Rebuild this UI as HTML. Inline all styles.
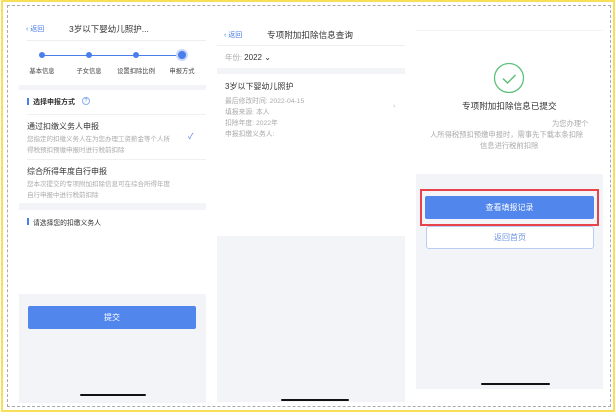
<!DOCTYPE html>
<html><head><meta charset="utf-8"><style>
*{margin:0;padding:0;box-sizing:border-box}
body{width:616px;height:413px;background:#fff;position:relative;overflow:hidden;font-family:"Liberation Sans","Noto Sans CJK SC",sans-serif;color:#333}
.a{position:absolute;white-space:nowrap}
.yl{position:absolute;left:1px;top:0;width:614px;height:412px;border:2px solid #f8df5a}
.dash{position:absolute;left:7px;top:5px;width:604px;height:402px;border:1px dashed #aaa}
.p{position:absolute;background:#f3f4f8}
.w{position:absolute;background:#fff}
.t{font-size:8px;color:#333}
.s{font-size:6.5px;color:#aaa}
.bl{color:#4a7eea}
.hi{position:absolute;height:2px;background:#111;border-radius:1px}
.dot{position:absolute;width:6px;height:6px;border-radius:50%;background:#4a7eea}
.lb{position:absolute;font-size:6.3px;color:#444;text-align:center;width:50px;white-space:nowrap}
</style></head><body>
<div class="yl"></div><div class="dash"></div>

<!-- panel 1 -->
<div class="p" style="left:19px;top:13px;width:187px;height:390px"></div>
<div class="w" style="left:19px;top:13px;width:187px;height:72px"></div>
<div class="w" style="left:19px;top:90px;width:187px;height:113px"></div>
<div class="w" style="left:19px;top:210px;width:187px;height:84px"></div>
<div class="a bl" style="left:26px;top:24px;font-size:7px">&#x2039; 返回</div>
<div class="a t" style="left:69px;top:23px;font-size:8.5px">3岁以下婴幼儿照护...</div>
<div class="a" style="left:27px;top:40px;width:179px;height:1px;background:#eee"></div>
<div class="a" style="left:42px;top:55px;width:140px;height:1px;background:#4a7eea"></div>
<div class="dot" style="left:39px;top:52px"></div>
<div class="dot" style="left:86px;top:52px"></div>
<div class="dot" style="left:133px;top:52px"></div>
<div class="dot" style="left:178px;top:51px;width:8px;height:8px;box-shadow:0 0 0 2px #c9d8fa"></div>
<div class="lb" style="left:17px;top:66px">基本信息</div>
<div class="lb" style="left:64px;top:66px">子女信息</div>
<div class="lb" style="left:111px;top:66px">设置扣除比例</div>
<div class="lb" style="left:157px;top:66px">申报方式</div>
<div class="a" style="left:27px;top:98px;width:2px;height:7px;background:#4a7eea"></div>
<div class="a" style="left:33px;top:97px;font-size:7px;color:#333;font-weight:bold">选择申报方式</div>
<div class="a bl" style="left:82px;top:97px;width:8px;height:8px;border:1px solid #8ab0f2;border-radius:50%;font-size:5px;text-align:center;line-height:6px">?</div>
<div class="a" style="left:27px;top:114px;width:179px;height:1px;background:#f0f0f0"></div>
<div class="a t" style="left:27px;top:121px">通过扣缴义务人申报</div>
<div class="a s" style="left:27px;top:133px">您指定的扣缴义务人在为您办理工资薪金等个人所</div>
<div class="a s" style="left:27px;top:144px">得税预扣预缴申报时进行税前扣除</div>
<div class="a bl" style="left:188px;top:131px;font-size:8px">✓</div>
<div class="a" style="left:27px;top:159px;width:179px;height:1px;background:#f0f0f0"></div>
<div class="a t" style="left:27px;top:166px">综合所得年度自行申报</div>
<div class="a s" style="left:27px;top:178px">您本次提交的专项附加扣除信息可在综合所得年度</div>
<div class="a s" style="left:27px;top:189px">自行申报中进行税前扣除</div>
<div class="a" style="left:27px;top:218px;width:2px;height:7px;background:#4a7eea"></div>
<div class="a" style="left:33px;top:217px;font-size:6.8px;color:#333">请选择您的扣缴义务人</div>
<div class="a" style="left:28px;top:306px;width:168px;height:23px;background:#5186ec;border-radius:2px;color:#fff;font-size:8px;text-align:center;line-height:23px">提交</div>
<div class="hi" style="left:80px;top:394px;width:66px"></div>

<!-- panel 2 -->
<div class="p" style="left:217px;top:13px;width:188px;height:389px"></div>
<div class="w" style="left:217px;top:13px;width:188px;height:55px"></div>
<div class="w" style="left:217px;top:74px;width:188px;height:162px"></div>
<div class="a bl" style="left:224px;top:30px;font-size:7px">&#x2039; 返回</div>
<div class="a t" style="left:267px;top:29px;font-size:8.6px">专项附加扣除信息查询</div>
<div class="a" style="left:217px;top:45px;width:188px;height:1px;background:#eee"></div>
<div class="a" style="left:225px;top:52px;font-size:7.5px;color:#aaa">年份: <span style="color:#333;font-size:8px">2022 ⌄</span></div>
<div class="a t" style="left:225px;top:81px;font-size:8px">3岁以下婴幼儿照护</div>
<div class="a s" style="left:225px;top:95px;font-size:6.8px">最后修改时间: 2022-04-15</div>
<div class="a s" style="left:225px;top:106px;font-size:6.8px">填报来源: 本人</div>
<div class="a s" style="left:225px;top:117px;font-size:6.8px">扣除年度: 2022年</div>
<div class="a s" style="left:225px;top:128px;font-size:6.8px">申报扣缴义务人:</div>
<div class="a" style="left:393px;top:103px;font-size:7px;color:#bbb">›</div>
<div class="hi" style="left:281px;top:399px;width:68px"></div>

<!-- panel 3 -->
<div class="p" style="left:416px;top:30px;width:187px;height:359px"></div>
<div class="w" style="left:416px;top:31px;width:187px;height:143px"></div>
<svg class="a" style="left:493px;top:62px" width="32" height="32" viewBox="0 0 32 32"><circle cx="16" cy="16" r="14.5" fill="none" stroke="#5cc17a" stroke-width="1.3"/><path d="M10 16.5l4.5 4.5 8-8" fill="none" stroke="#5cc17a" stroke-width="1.5"/></svg>
<div class="a t" style="left:462px;top:100px;font-size:8.6px">专项附加扣除信息已提交</div>
<div class="a s" style="left:552px;top:119px;font-size:7.3px">为您办理个</div>
<div class="a s" style="left:430px;top:130px;font-size:7.3px">人所得税预扣预缴申报时，需事先下载本条扣除</div>
<div class="a s" style="left:480px;top:141px;font-size:7.3px">信息进行税前扣除</div>
<div class="a" style="left:420px;top:189px;width:179px;height:37px;border:2px solid #e8434b"></div>
<div class="a" style="left:425px;top:196px;width:169px;height:23px;background:#5186ec;border-radius:2px;color:#fff;font-size:8px;text-align:center;line-height:23px">查看填报记录</div>
<div class="a" style="left:426px;top:226px;width:168px;height:23px;background:#fff;border:1px solid #b9ccf3;border-radius:3px;color:#6d94e6;font-size:8px;text-align:center;line-height:21px">返回首页</div>
<div class="hi" style="left:481px;top:383px;width:69px"></div>
</body></html>
